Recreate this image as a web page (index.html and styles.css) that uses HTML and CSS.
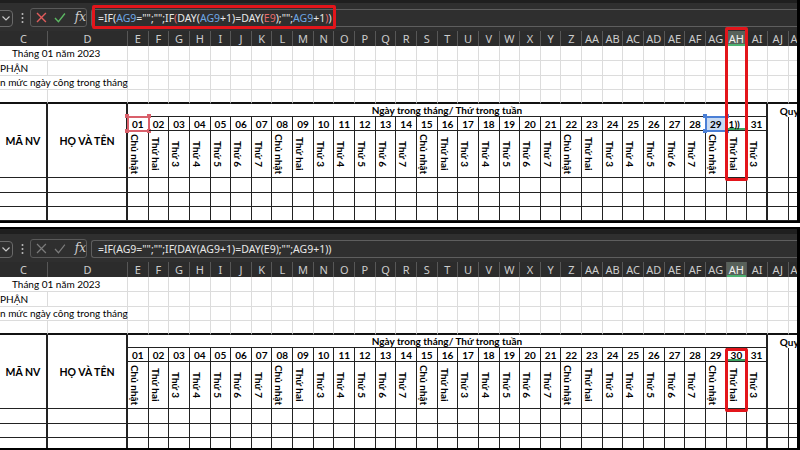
FILE: index.html
```html
<!DOCTYPE html>
<html lang="vi">
<head>
<meta charset="utf-8">
<title>Excel - Ngày công</title>
<link rel="stylesheet" href="styles.css">
</head>
<body>

<div class="panel first">
  <div class="toolbar">
    <div class="namebox"><svg width="8" height="5" viewBox="0 0 8 5"><polyline points="0.5,0.5 4,4 7.5,0.5" fill="none" stroke="#c8c8c8" stroke-width="1.2"/></svg></div>
    <div class="dots"><svg width="3" height="12" viewBox="0 0 3 12"><circle cx="1.5" cy="2" r="1" fill="#bdbdbd"/><circle cx="1.5" cy="6" r="1" fill="#bdbdbd"/><circle cx="1.5" cy="10" r="1" fill="#bdbdbd"/></svg></div>
    <div class="fnbox">
      <svg class="ico-x" width="11" height="11" viewBox="0 0 11 11"><path d="M1 1 L10 10 M10 1 L1 10" stroke="#e05b5b" stroke-width="1.4" fill="none"/></svg>
      <svg class="ico-ok" width="12" height="11" viewBox="0 0 12 11"><polyline points="1,6 4.5,9.8 11,1.5" stroke="#5cb863" stroke-width="1.4" fill="none"/></svg>
      <span class="fx">fx</span>
    </div>
    <div class="formula">=IF(<b class="blue">AG9</b>="";"";IF<b class="red">(</b>DAY(<b class="blue">AG9</b>+1)=DAY(<b class="red">E9</b>);"";<b class="blue">AG9</b>+1<b class="red">)</b>)</div>
  </div>
  <div class="colhead">
    <div>C</div><div>D</div><div>E</div><div>F</div><div>G</div><div>H</div><div>I</div><div>J</div><div>K</div><div>L</div><div>M</div><div>N</div><div>O</div><div>P</div><div>Q</div><div>R</div><div>S</div><div>T</div><div>U</div><div>V</div><div>W</div><div>X</div><div>Y</div><div>Z</div><div>AA</div><div>AB</div><div>AC</div><div>AD</div><div>AE</div><div>AF</div><div>AG</div><div class="sel">AH</div><div>AI</div><div>AJ</div><div class="cut">A</div>
  </div>
  <div class="sheet">
    <div class="row up"><span class="span2 t1">Tháng 01 năm 2023</span><i></i><i></i><i></i><i></i><i></i><i></i><i></i><i></i><i></i><i></i><i></i><i></i><i></i><i></i><i></i><i></i><i></i><i></i><i></i><i></i><i></i><i></i><i></i><i></i><i></i><i></i><i></i><i></i><i></i><i></i><i></i><i></i><i></i></div>
    <div class="row up"><span class="t2">PHẬN</span><i></i><i></i><i></i><i></i><i></i><i></i><i></i><i></i><i></i><i></i><i></i><i></i><i></i><i></i><i></i><i></i><i></i><i></i><i></i><i></i><i></i><i></i><i></i><i></i><i></i><i></i><i></i><i></i><i></i><i></i><i></i><i></i><i></i><i></i></div>
    <div class="row up"><span class="span2 t3">n mức ngày công trong tháng</span><i></i><i></i><i></i><i></i><i></i><i></i><i></i><i></i><i></i><i></i><i></i><i></i><i></i><i></i><i></i><i></i><i></i><i></i><i></i><i></i><i></i><i></i><i></i><i></i><i></i><i></i><i></i><i></i><i></i><i></i><i></i><i></i><i></i></div>
    <div class="row up last"><i></i><i></i><i></i><i></i><i></i><i></i><i></i><i></i><i></i><i></i><i></i><i></i><i></i><i></i><i></i><i></i><i></i><i></i><i></i><i></i><i></i><i></i><i></i><i></i><i></i><i></i><i></i><i></i><i></i><i></i><i></i><i></i><i></i><i></i><i></i></div>
    <div class="row tb hrow"><span class="hdr">MÃ NV</span><span class="hdr">HỌ VÀ TÊN</span><span class="ngay">Ngày trong tháng/ Thứ trong tuần</span><span class="quy">Quy</span></div>
    <div class="row tb nums"><span class="ref-red">01</span><span>02</span><span>03</span><span>04</span><span>05</span><span>06</span><span>07</span><span>08</span><span>09</span><span>10</span><span>11</span><span>12</span><span>13</span><span>14</span><span>15</span><span>16</span><span>17</span><span>18</span><span>19</span><span>20</span><span>21</span><span>22</span><span>23</span><span>24</span><span>25</span><span>26</span><span>27</span><span>28</span><span class="ref-blue">29</span><span class="active edit">1))</span><span>31</span><i class="aj"></i><i class="ak"></i></div>
    <div class="row tb vts"><span><em>Chủ nhật</em></span><span><em>Thứ hai</em></span><span><em>Thứ 3</em></span><span><em>Thứ 4</em></span><span><em>Thứ 5</em></span><span><em>Thứ 6</em></span><span><em>Thứ 7</em></span><span><em>Chủ nhật</em></span><span><em>Thứ hai</em></span><span><em>Thứ 3</em></span><span><em>Thứ 4</em></span><span><em>Thứ 5</em></span><span><em>Thứ 6</em></span><span><em>Thứ 7</em></span><span><em>Chủ nhật</em></span><span><em>Thứ hai</em></span><span><em>Thứ 3</em></span><span><em>Thứ 4</em></span><span><em>Thứ 5</em></span><span><em>Thứ 6</em></span><span><em>Thứ 7</em></span><span><em>Chủ nhật</em></span><span><em>Thứ hai</em></span><span><em>Thứ 3</em></span><span><em>Thứ 4</em></span><span><em>Thứ 5</em></span><span><em>Thứ 6</em></span><span><em>Thứ 7</em></span><span><em>Chủ nhật</em></span><span><em>Thứ hai</em></span><span><em>Thứ 3</em></span></div>
    <div class="row tb data"><i></i><i></i><i></i><i></i><i></i><i></i><i></i><i></i><i></i><i></i><i></i><i></i><i></i><i></i><i></i><i></i><i></i><i></i><i></i><i></i><i></i><i></i><i></i><i></i><i></i><i></i><i></i><i></i><i></i><i></i><i></i><i></i><i></i><i></i><i></i></div>
    <div class="row tb data"><i></i><i></i><i></i><i></i><i></i><i></i><i></i><i></i><i></i><i></i><i></i><i></i><i></i><i></i><i></i><i></i><i></i><i></i><i></i><i></i><i></i><i></i><i></i><i></i><i></i><i></i><i></i><i></i><i></i><i></i><i></i><i></i><i></i><i></i><i></i></div>
    <div class="row tb data"><i></i><i></i><i></i><i></i><i></i><i></i><i></i><i></i><i></i><i></i><i></i><i></i><i></i><i></i><i></i><i></i><i></i><i></i><i></i><i></i><i></i><i></i><i></i><i></i><i></i><i></i><i></i><i></i><i></i><i></i><i></i><i></i><i></i><i></i><i></i></div>
  </div>
  <div class="mark mark-formula"></div>
  <div class="mark mark-col1"></div>
</div>

<div class="panel second">
  <div class="toolbar">
    <div class="namebox"><svg width="8" height="5" viewBox="0 0 8 5"><polyline points="0.5,0.5 4,4 7.5,0.5" fill="none" stroke="#c8c8c8" stroke-width="1.2"/></svg></div>
    <div class="dots"><svg width="3" height="12" viewBox="0 0 3 12"><circle cx="1.5" cy="2" r="1" fill="#bdbdbd"/><circle cx="1.5" cy="6" r="1" fill="#bdbdbd"/><circle cx="1.5" cy="10" r="1" fill="#bdbdbd"/></svg></div>
    <div class="fnbox">
      <svg class="ico-x" width="11" height="11" viewBox="0 0 11 11"><path d="M1 1 L10 10 M10 1 L1 10" stroke="#7c7c7c" stroke-width="1.2" fill="none"/></svg>
      <svg class="ico-ok" width="12" height="11" viewBox="0 0 12 11"><polyline points="1,6 4.5,9.8 11,1.5" stroke="#7c7c7c" stroke-width="1.2" fill="none"/></svg>
      <span class="fx">fx</span>
    </div>
    <div class="formula">=IF(AG9="";"";IF(DAY(AG9+1)=DAY(E9);"";AG9+1))</div>
  </div>
  <div class="colhead">
    <div>C</div><div>D</div><div>E</div><div>F</div><div>G</div><div>H</div><div>I</div><div>J</div><div>K</div><div>L</div><div>M</div><div>N</div><div>O</div><div>P</div><div>Q</div><div>R</div><div>S</div><div>T</div><div>U</div><div>V</div><div>W</div><div>X</div><div>Y</div><div>Z</div><div>AA</div><div>AB</div><div>AC</div><div>AD</div><div>AE</div><div>AF</div><div>AG</div><div class="sel">AH</div><div>AI</div><div>AJ</div><div class="cut">A</div>
  </div>
  <div class="sheet">
    <div class="row up"><span class="span2 t1">Tháng 01 năm 2023</span><i></i><i></i><i></i><i></i><i></i><i></i><i></i><i></i><i></i><i></i><i></i><i></i><i></i><i></i><i></i><i></i><i></i><i></i><i></i><i></i><i></i><i></i><i></i><i></i><i></i><i></i><i></i><i></i><i></i><i></i><i></i><i></i><i></i></div>
    <div class="row up"><span class="t2">PHẬN</span><i></i><i></i><i></i><i></i><i></i><i></i><i></i><i></i><i></i><i></i><i></i><i></i><i></i><i></i><i></i><i></i><i></i><i></i><i></i><i></i><i></i><i></i><i></i><i></i><i></i><i></i><i></i><i></i><i></i><i></i><i></i><i></i><i></i><i></i></div>
    <div class="row up"><span class="span2 t3">n mức ngày công trong tháng</span><i></i><i></i><i></i><i></i><i></i><i></i><i></i><i></i><i></i><i></i><i></i><i></i><i></i><i></i><i></i><i></i><i></i><i></i><i></i><i></i><i></i><i></i><i></i><i></i><i></i><i></i><i></i><i></i><i></i><i></i><i></i><i></i><i></i></div>
    <div class="row up last"><i></i><i></i><i></i><i></i><i></i><i></i><i></i><i></i><i></i><i></i><i></i><i></i><i></i><i></i><i></i><i></i><i></i><i></i><i></i><i></i><i></i><i></i><i></i><i></i><i></i><i></i><i></i><i></i><i></i><i></i><i></i><i></i><i></i><i></i><i></i></div>
    <div class="row tb hrow"><span class="hdr">MÃ NV</span><span class="hdr">HỌ VÀ TÊN</span><span class="ngay">Ngày trong tháng/ Thứ trong tuần</span><span class="quy">Quy</span></div>
    <div class="row tb nums"><span>01</span><span>02</span><span>03</span><span>04</span><span>05</span><span>06</span><span>07</span><span>08</span><span>09</span><span>10</span><span>11</span><span>12</span><span>13</span><span>14</span><span>15</span><span>16</span><span>17</span><span>18</span><span>19</span><span>20</span><span>21</span><span>22</span><span>23</span><span>24</span><span>25</span><span>26</span><span>27</span><span>28</span><span>29</span><span class="active">30</span><span>31</span><i class="aj"></i><i class="ak"></i></div>
    <div class="row tb vts"><span><em>Chủ nhật</em></span><span><em>Thứ hai</em></span><span><em>Thứ 3</em></span><span><em>Thứ 4</em></span><span><em>Thứ 5</em></span><span><em>Thứ 6</em></span><span><em>Thứ 7</em></span><span><em>Chủ nhật</em></span><span><em>Thứ hai</em></span><span><em>Thứ 3</em></span><span><em>Thứ 4</em></span><span><em>Thứ 5</em></span><span><em>Thứ 6</em></span><span><em>Thứ 7</em></span><span><em>Chủ nhật</em></span><span><em>Thứ hai</em></span><span><em>Thứ 3</em></span><span><em>Thứ 4</em></span><span><em>Thứ 5</em></span><span><em>Thứ 6</em></span><span><em>Thứ 7</em></span><span><em>Chủ nhật</em></span><span><em>Thứ hai</em></span><span><em>Thứ 3</em></span><span><em>Thứ 4</em></span><span><em>Thứ 5</em></span><span><em>Thứ 6</em></span><span><em>Thứ 7</em></span><span><em>Chủ nhật</em></span><span><em>Thứ hai</em></span><span><em>Thứ 3</em></span></div>
    <div class="row tb data"><i></i><i></i><i></i><i></i><i></i><i></i><i></i><i></i><i></i><i></i><i></i><i></i><i></i><i></i><i></i><i></i><i></i><i></i><i></i><i></i><i></i><i></i><i></i><i></i><i></i><i></i><i></i><i></i><i></i><i></i><i></i><i></i><i></i><i></i><i></i></div>
    <div class="row tb data"><i></i><i></i><i></i><i></i><i></i><i></i><i></i><i></i><i></i><i></i><i></i><i></i><i></i><i></i><i></i><i></i><i></i><i></i><i></i><i></i><i></i><i></i><i></i><i></i><i></i><i></i><i></i><i></i><i></i><i></i><i></i><i></i><i></i><i></i><i></i></div>
    <div class="row tb data"><i></i><i></i><i></i><i></i><i></i><i></i><i></i><i></i><i></i><i></i><i></i><i></i><i></i><i></i><i></i><i></i><i></i><i></i><i></i><i></i><i></i><i></i><i></i><i></i><i></i><i></i><i></i><i></i><i></i><i></i><i></i><i></i><i></i><i></i><i></i></div>
  </div>
  <div class="mark mark-col2"></div>
</div>

</body>
</html>
```

FILE: styles.css
```css
* { box-sizing: border-box; }
html, body { margin: 0; padding: 0; }
body {
  width: 800px;
  height: 450px;
  overflow: hidden;
  background: #fff;
  font-family: Lato, "Noto Sans", sans-serif;
}

.panel {
  --cols: 48px 80px repeat(33, 20.645px);
  position: relative;
  width: 800px;
  border-top: 2px solid #000;
  border-bottom: 2px solid #000;
  border-right: 3px solid #000;
  overflow: hidden;
  background: #fff;
}
.first { margin-top: -4px; margin-bottom: 4px; }
.second { height: 223px; }

/* ---------- formula toolbar ---------- */
.toolbar {
  height: 33px;
  background: linear-gradient(#1f1f1f 0 5px, #2f2f2f 5px);
  display: flex;
  align-items: flex-start;
  padding-top: 11px;
}
.namebox {
  width: 18px;
  height: 17px;
  margin-left: -5px;
  margin-top: 1px;
  border: 1px solid #6a6a6a;
  border-radius: 4px;
  display: flex;
  align-items: center;
  justify-content: flex-end;
  padding-right: 2px;
}
.dots {
  width: 3px;
  height: 18px;
  margin-left: 8px;
  display: flex;
  align-items: center;
}
.fnbox {
  width: 57px;
  height: 19px;
  margin-left: 6px;
  margin-top: -1px;
  border: 1px solid #5a5a5a;
  border-radius: 3px;
  display: flex;
  align-items: center;
  padding-left: 5px;
}
.ico-ok { margin-left: 7px; }
.fx {
  margin-left: 9px;
  font-family: "DejaVu Serif", "Liberation Serif", serif;
  font-style: italic;
  font-size: 12px;
  color: #cfcfcf;
  line-height: 17px;
}
.formula {
  flex: 1;
  height: 18px;
  margin-left: 4px;
  border: 1px solid #5e5e5e;
  border-right: none;
  border-radius: 3px 0 0 3px;
  padding-left: 6px;
  font-family: "Noto Sans", sans-serif;
  font-size: 10.5px;
  line-height: 16px;
  color: #e8e8e8;
  white-space: nowrap;
  overflow: hidden;
}
.formula b { font-weight: normal; }
.formula .blue { color: #6ea8e6; }
.formula .red { color: #e46b6b; }

/* ---------- column letters ---------- */
.colhead {
  display: grid;
  grid-template-columns: var(--cols);
  height: 15px;
  background: #2c2c2c;
  color: #cdcdcd;
  font-family: "Noto Sans", sans-serif;
  font-size: 11px;
  line-height: 15px;
}
.colhead > div {
  border-right: 1px solid #575757;
  text-align: center;
  white-space: nowrap;
  overflow: hidden;
}
.colhead > .cut { text-align: left; padding-left: 2px; }
.colhead > .sel {
  background: #58625b;
  color: #f2f2f2;
  box-shadow: inset 0 -2px 0 #4cae6f;
}

/* ---------- sheet ---------- */
.sheet {
  display: grid;
  grid-template-columns: var(--cols);
  grid-template-rows: 15px 14.5px 14.5px 14px 13px 14px 47px 15px 14px 14px;
  color: #000;
  font-size: 10px;
}
.row { display: contents; }
.sheet i, .sheet span {
  display: flex;
  align-items: center;
  font-style: normal;
  white-space: nowrap;
  min-width: 0;
}

.up > * {
  border-right: 1px solid #dcdcdc;
  border-bottom: 1px solid #dcdcdc;
}
.up.last > * { border-bottom: 2px solid #111; }
.span2 { grid-column: span 2; }
.t1 { padding-left: 12px; }
.t2, .t3 { padding-left: 0; }

.tb > * {
  border-right: 1px solid #222;
  border-bottom: 1px solid #222;
}
.hdr {
  grid-row: span 3;
  justify-content: center;
  font-weight: bold;
  font-size: 10.5px;
}
.hrow > :nth-child(-n+3) { border-right-width: 2px; }
.ngay {
  grid-column: span 31;
  justify-content: center;
  font-weight: bold;
  font-size: 10px;
}
.quy {
  grid-column: span 2;
  border-bottom: none !important;
  border-right: none !important;
  padding-left: 12px;
  font-weight: bold;
  font-size: 10px;
}
.nums > span {
  justify-content: center;
  font-weight: bold;
  font-size: 10px;
  position: relative;
}
.nums > :nth-child(31), .vts > :nth-child(31) { border-right-width: 2px; }
.aj, .ak { grid-row: span 2; }
.tb > .ak { border-right: none; }

.vts > span {
  justify-content: flex-start;
  padding-left: 1px;
}
.vts em {
  writing-mode: vertical-rl;
  font-style: normal;
  font-weight: bold;
  font-size: 10px;
  line-height: 11px;
}
.data > :nth-child(-n+2), .data > :nth-child(33) { border-right-width: 2px; }

/* reference highlights */
.ref-red { outline: 2px solid #d9606b; outline-offset: -1px; }
.ref-blue { outline: 2px solid #4a7fd6; outline-offset: -1px; background: #c9dbf3; }
.ref-red::before, .ref-blue::before {
  content: "";
  position: absolute;
  inset: -3px;
  --k: #d9606b;
  background:
    linear-gradient(var(--k), var(--k)) 0 0 / 4px 4px no-repeat,
    linear-gradient(var(--k), var(--k)) 100% 0 / 4px 4px no-repeat,
    linear-gradient(var(--k), var(--k)) 0 100% / 4px 4px no-repeat,
    linear-gradient(var(--k), var(--k)) 100% 100% / 4px 4px no-repeat;
}
.ref-blue::before { --k: #4a7fd6; }
.active { box-shadow: inset 0 -2px 0 #3fa463; }
.edit { justify-content: flex-start !important; padding-left: 2px; }

/* red annotation boxes */
.mark {
  position: absolute;
  border: 3px solid #e3151b;
  border-radius: 2px;
}
.mark-formula { left: 92px; top: 7px; width: 244px; height: 24px; }
.mark-col1 { left: 725px; top: 29px; width: 23px; height: 154px; }
.mark-col2 { left: 725px; top: 119px; width: 23px; height: 64px; }
```
